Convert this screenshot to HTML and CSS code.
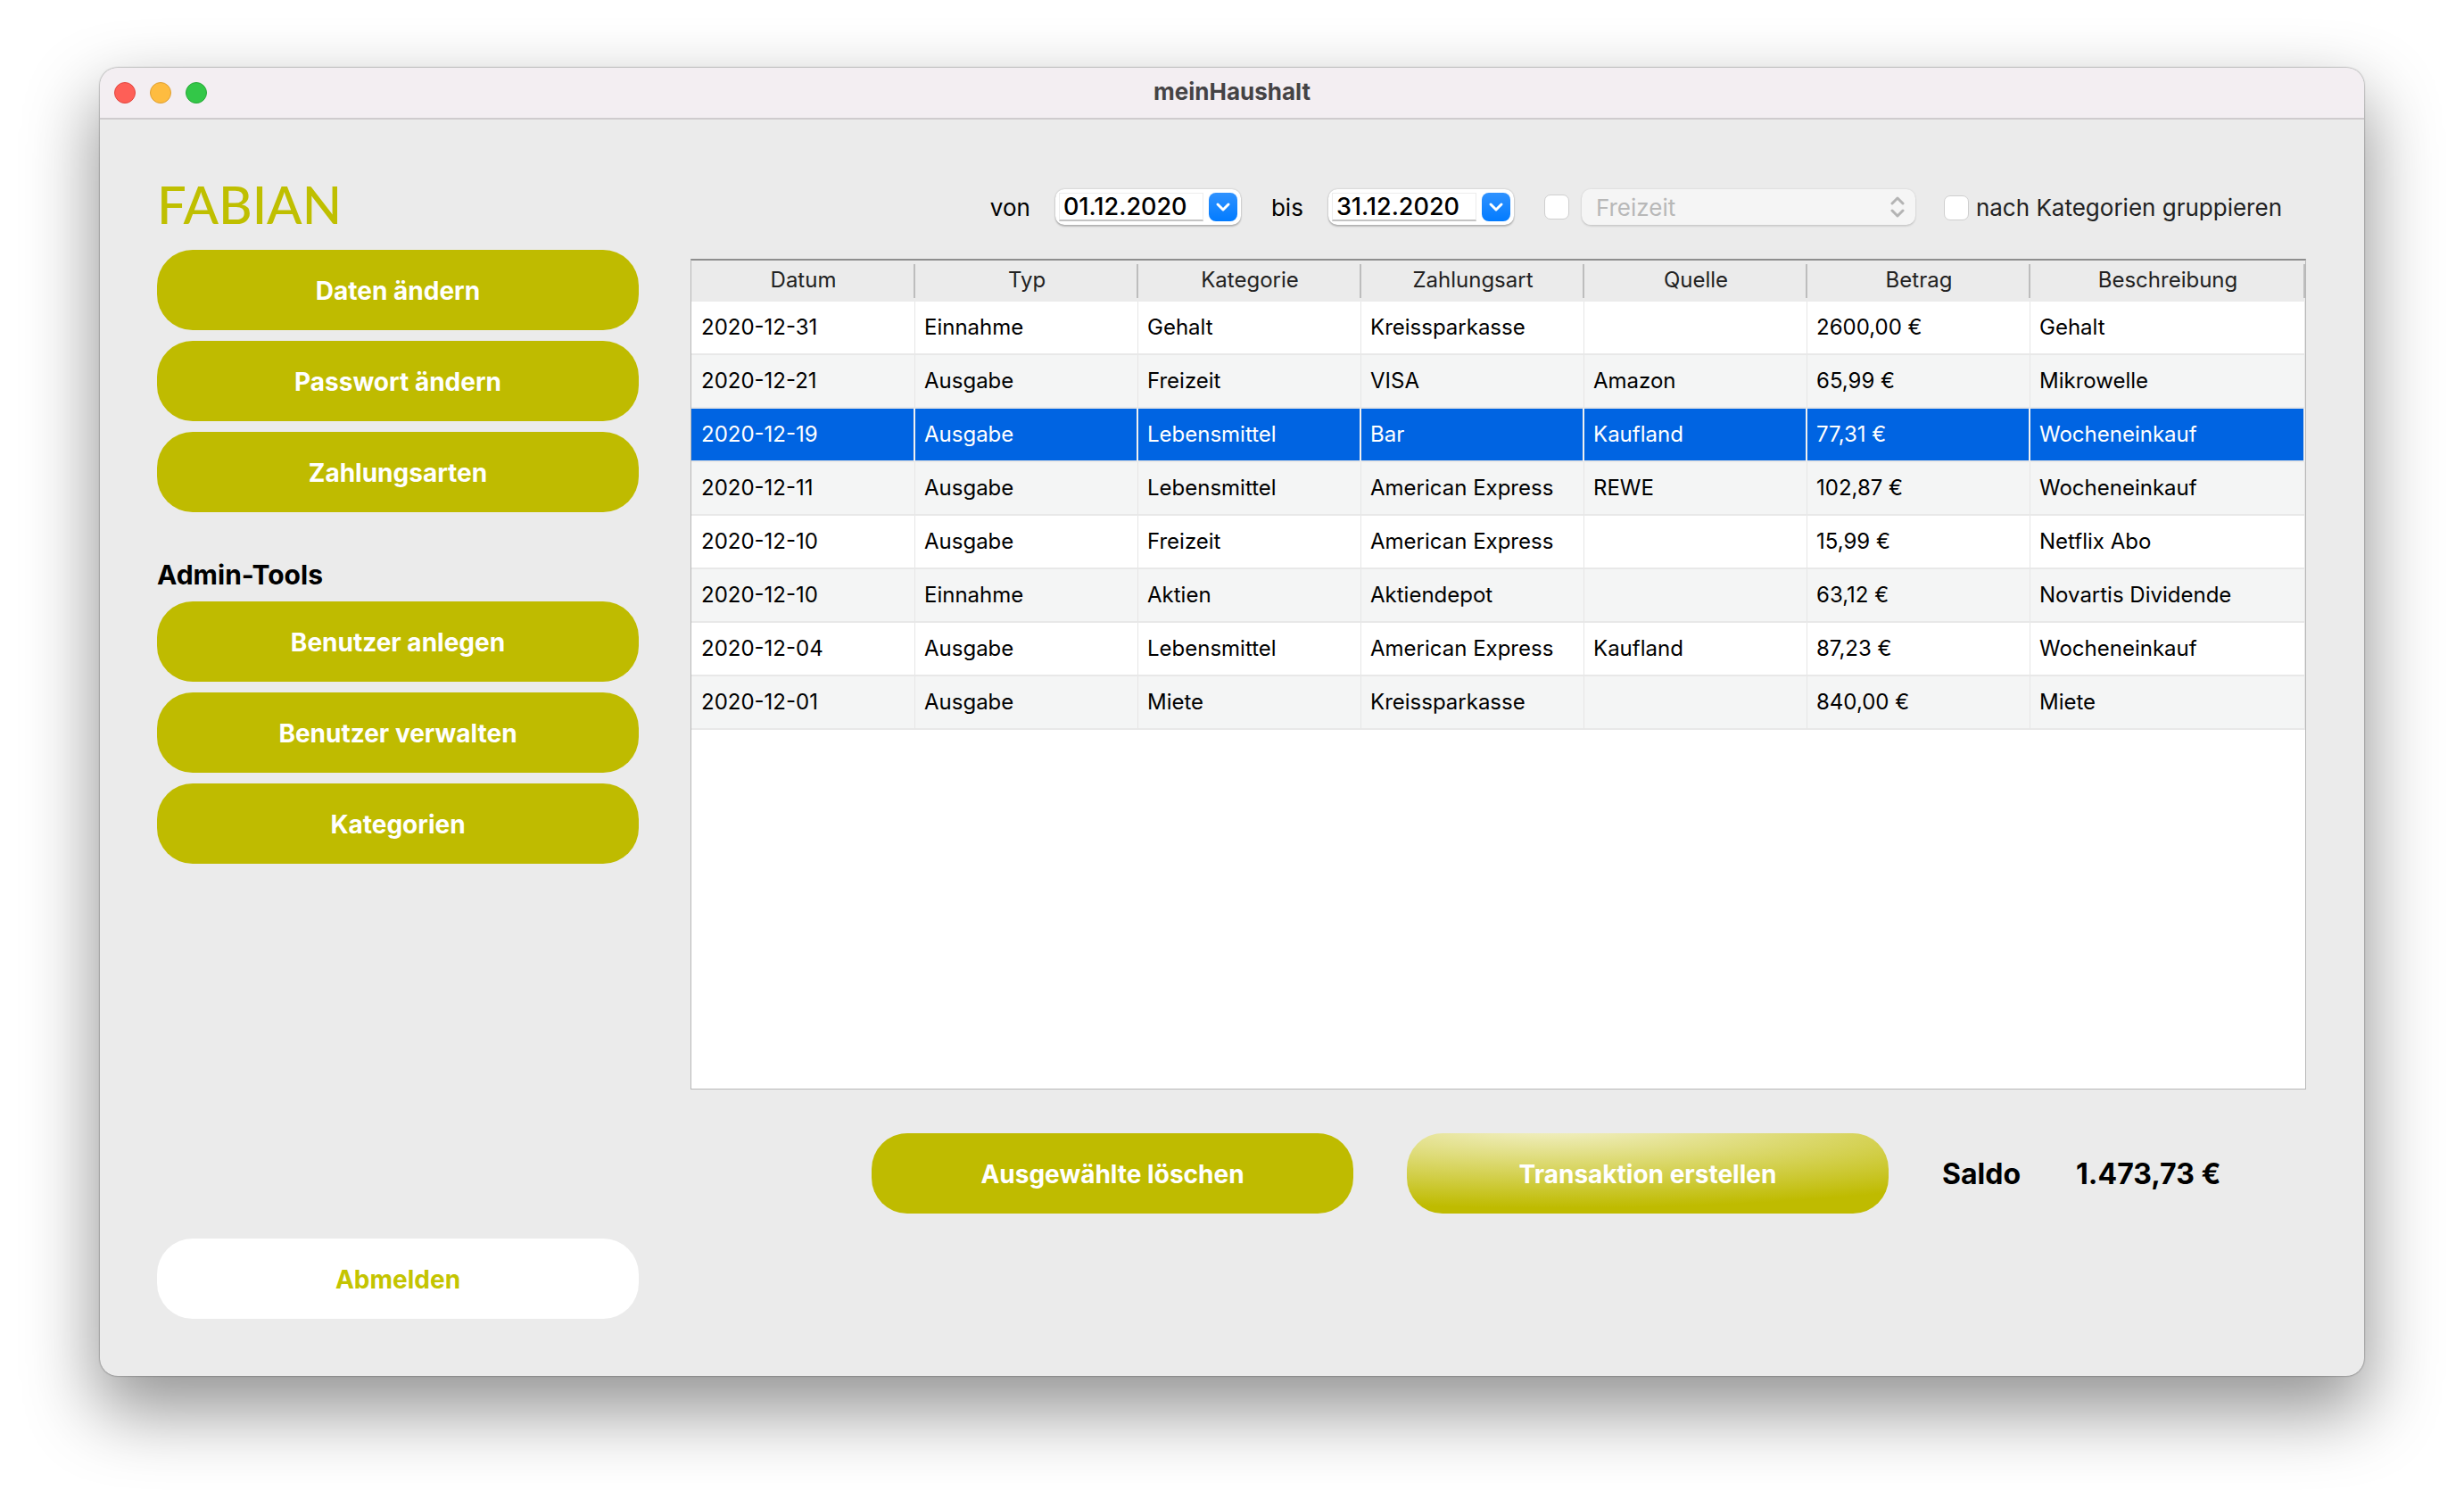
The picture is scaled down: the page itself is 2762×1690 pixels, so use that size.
FILE: index.html
```html
<!DOCTYPE html>
<html lang="de">
<head>
<meta charset="utf-8">
<title>meinHaushalt</title>
<link rel="stylesheet" href="styles.css">
</head>
<body>
<div class="window">
  <header class="titlebar">
    <div class="lights">
      <button class="light close" type="button" aria-label="Schließen"></button>
      <button class="light minimize" type="button" aria-label="Minimieren"></button>
      <button class="light zoom" type="button" aria-label="Vergrößern"></button>
    </div>
    <h1 class="title">meinHaushalt</h1>
  </header>
  <div class="content">
    <aside class="sidebar">
      <h2 class="user">FABIAN</h2>
      <nav class="menu">
        <button class="btn" type="button">Daten ändern</button>
        <button class="btn" type="button">Passwort ändern</button>
        <button class="btn" type="button">Zahlungsarten</button>
      </nav>
      <h3 class="section">Admin-Tools</h3>
      <nav class="menu">
        <button class="btn" type="button">Benutzer anlegen</button>
        <button class="btn" type="button">Benutzer verwalten</button>
        <button class="btn" type="button">Kategorien</button>
      </nav>
      <button class="btn logout" type="button">Abmelden</button>
    </aside>
    <main class="main">
      <form class="filters">
        <label class="range" for="from">von</label>
        <div class="date">
          <input class="date-text" id="from" type="text" value="01.12.2020">
          <button class="date-open" type="button" aria-label="Kalender öffnen"><svg width="32" height="32" viewBox="0 0 32 32"><path d="M10 13l6 6 6-6" fill="none" stroke="#fff" stroke-width="3" stroke-linecap="round" stroke-linejoin="round"/></svg></button>
        </div>
        <label class="range" for="to">bis</label>
        <div class="date">
          <input class="date-text" id="to" type="text" value="31.12.2020">
          <button class="date-open" type="button" aria-label="Kalender öffnen"><svg width="32" height="32" viewBox="0 0 32 32"><path d="M10 13l6 6 6-6" fill="none" stroke="#fff" stroke-width="3" stroke-linecap="round" stroke-linejoin="round"/></svg></button>
        </div>
        <div class="category">
          <input class="check" type="checkbox" aria-label="Nach Kategorie filtern">
          <div class="select-wrap">
            <select class="select" aria-label="Kategorie" disabled><option>Freizeit</option></select>
            <svg class="arrows" width="16" height="24" viewBox="0 0 16 24"><path d="M2 8l6-6 6 6M2 16l6 6 6-6" fill="none" stroke="#b4b4b4" stroke-width="3" stroke-linecap="round" stroke-linejoin="round"/></svg>
          </div>
        </div>
        <label class="group"><input class="check" type="checkbox">nach Kategorien gruppieren</label>
      </form>
      <div class="table-box">
        <table class="table">
          <thead>
            <tr><th class="first">Datum</th><th>Typ</th><th>Kategorie</th><th>Zahlungsart</th><th>Quelle</th><th>Betrag</th><th class="last">Beschreibung</th></tr>
          </thead>
          <tbody>
            <tr><td>2020-12-31</td><td>Einnahme</td><td>Gehalt</td><td>Kreissparkasse</td><td></td><td>2600,00 €</td><td>Gehalt</td></tr>
            <tr><td>2020-12-21</td><td>Ausgabe</td><td>Freizeit</td><td>VISA</td><td>Amazon</td><td>65,99 €</td><td>Mikrowelle</td></tr>
            <tr class="selected"><td>2020-12-19</td><td>Ausgabe</td><td>Lebensmittel</td><td>Bar</td><td>Kaufland</td><td>77,31 €</td><td>Wocheneinkauf</td></tr>
            <tr><td>2020-12-11</td><td>Ausgabe</td><td>Lebensmittel</td><td>American Express</td><td>REWE</td><td>102,87 €</td><td>Wocheneinkauf</td></tr>
            <tr><td>2020-12-10</td><td>Ausgabe</td><td>Freizeit</td><td>American Express</td><td></td><td>15,99 €</td><td>Netflix Abo</td></tr>
            <tr><td>2020-12-10</td><td>Einnahme</td><td>Aktien</td><td>Aktiendepot</td><td></td><td>63,12 €</td><td>Novartis Dividende</td></tr>
            <tr><td>2020-12-04</td><td>Ausgabe</td><td>Lebensmittel</td><td>American Express</td><td>Kaufland</td><td>87,23 €</td><td>Wocheneinkauf</td></tr>
            <tr><td>2020-12-01</td><td>Ausgabe</td><td>Miete</td><td>Kreissparkasse</td><td></td><td>840,00 €</td><td>Miete</td></tr>
          </tbody>
        </table>
      </div>
      <footer class="actions">
        <button class="btn" type="button">Ausgewählte löschen</button>
        <button class="btn create" type="button">Transaktion erstellen</button>
        <div class="saldo"><span class="saldo-label">Saldo</span><output class="amount">1.473,73 €</output></div>
      </footer>
    </main>
  </div>
</div>
</body>
</html>
```
FILE: styles.css
```css
* {
  box-sizing: border-box;
}

body {
  margin: 0;
  min-height: 100vh;
  padding: 76px 112px 148px;
  display: flex;
  background: #fff;
  color: #000;
  font-family: Inter, "Liberation Sans", sans-serif;
  font-size: 24px;
}

h1,
h2,
h3 {
  margin: 0;
}

button,
input,
select {
  font: inherit;
}

.window {
  flex: 1;
  display: flex;
  flex-direction: column;
  border-radius: 20px;
  background: #ebebeb;
  box-shadow: 0 0 2px rgba(0, 0, 0, 0.6), 0 36px 80px 4px rgba(0, 0, 0, 0.42);
}

.titlebar {
  height: 58px;
  padding: 0 16px;
  display: grid;
  grid-template-columns: 1fr auto 1fr;
  align-items: center;
  border-bottom: 2px solid #cfcbce;
  border-radius: 20px 20px 0 0;
  background: #f3eef2;
}

.lights {
  display: flex;
  gap: 16px;
}

.light {
  width: 24px;
  height: 24px;
  padding: 0;
  border: 1px solid;
  border-radius: 50%;
}

.close {
  background: #fe5f57;
  border-color: #e2463f;
}

.minimize {
  background: #febc40;
  border-color: #dfa033;
}

.zoom {
  background: #33c748;
  border-color: #27a938;
}

.title {
  padding-bottom: 3px;
  color: #454345;
  font-size: 26px;
  font-weight: 700;
}

.content {
  flex: 1;
  display: flex;
  gap: 58px;
  padding: 57px 65px 64px 64px;
}

.sidebar {
  flex: 0 0 540px;
  display: flex;
  flex-direction: column;
}

.user {
  height: 89px;
  padding-top: 6px;
  color: #bfbf00;
  font-family: Lato, sans-serif;
  font-size: 58px;
  font-weight: 500;
  line-height: 64px;
}

.menu {
  display: flex;
  flex-direction: column;
  gap: 12px;
}

.btn {
  width: 540px;
  height: 90px;
  padding: 2px 0 0;
  border: 0;
  border-radius: 40px;
  background: #bfbb00;
  color: #fff;
  font-size: 28px;
  font-weight: 700;
}

.section {
  padding: 50px 0 10px;
  font-size: 30px;
  line-height: 40px;
}

.logout {
  margin-top: auto;
  background: #fff;
  color: #c4c400;
}

.main {
  flex: 1;
  min-width: 0;
  display: flex;
  flex-direction: column;
}

.filters {
  height: 99px;
  padding: 21px 27px 0 0;
  display: flex;
  justify-content: flex-end;
  align-items: flex-start;
  font-size: 26px;
  line-height: 42px;
}

.range {
  padding-right: 28px;
}

.date {
  width: 208px;
  height: 40px;
  margin-right: 34px;
  padding: 4px;
  display: flex;
  justify-content: space-between;
  border-radius: 10px;
  background: #fff;
  box-shadow: 0 0 2px rgba(0, 0, 0, 0.25), 0 2px 2px rgba(0, 0, 0, 0.2);
}

.date-text {
  width: 162px;
  height: 32px;
  padding: 0 4px;
  border: 1px solid #ececec;
  border-bottom: 2px solid #c4c4c4;
  background: #fff;
  color: #000;
  font-size: 27px;
  font-weight: 500;
}

.date-open {
  width: 32px;
  height: 32px;
  padding: 0;
  border: 0;
  border-radius: 8px;
  background: linear-gradient(#2f92ff, #027bff);
}

.date-open svg {
  display: block;
}

.category {
  display: flex;
  align-items: center;
  gap: 14px;
  margin-right: 32px;
}

.check {
  appearance: none;
  width: 28px;
  height: 28px;
  margin: 0;
  border: 1px solid #cfcfcf;
  border-radius: 7px;
  background: #fff;
}

.select-wrap {
  display: grid;
  align-items: center;
}

.select {
  grid-area: 1 / 1;
  appearance: none;
  width: 374px;
  height: 40px;
  padding: 0 16px;
  border: 0;
  border-radius: 10px;
  background: #f5f5f5;
  color: #b8b8b8;
  opacity: 1;
  box-shadow: 0 0 2px rgba(0, 0, 0, 0.15), 0 2px 2px rgba(0, 0, 0, 0.1);
}

.arrows {
  grid-area: 1 / 1;
  justify-self: end;
  margin-right: 12px;
  pointer-events: none;
}

.group {
  display: flex;
  align-items: center;
  gap: 8px;
  color: #222;
}

.table-box {
  flex: 1;
  border: 1px solid #b8b8b8;
  border-top: 2px solid #8e8e8e;
  background: #fff;
}

.table {
  width: 100%;
  table-layout: fixed;
  border-collapse: separate;
  border-spacing: 0;
}

th {
  width: 250px;
  height: 46px;
  padding: 0 0 3px;
  background: linear-gradient(#bdbdbd, #bdbdbd) right 4px / 2px 38px no-repeat #ebebeb;
  color: #222;
  font-weight: 400;
}

.first {
  width: 251px;
}

.last {
  width: auto;
}

td {
  height: 60px;
  padding: 0 0 2px 10px;
  border-right: 1px solid #e6e6e6;
  border-bottom: 2px solid #e8e8e8;
  background: #fff;
  white-space: nowrap;
}

td:first-child {
  padding-left: 11px;
}

tbody tr:nth-child(even) td {
  background: #f4f5f5;
}

tbody .selected td {
  border-right: 2px solid #f0f0f0;
  background: #0064e2;
  color: #fff;
}

.actions {
  display: flex;
  gap: 60px;
  padding: 49px 88px 118px 0;
  justify-content: flex-end;
  align-items: center;
}

.create {
  background: radial-gradient(120% 101% at 30% -8%, #efedba 8%, #bfbb00 100%);
}

.saldo {
  display: flex;
  gap: 60px;
  font-size: 32px;
  font-weight: 700;
}

.saldo-label {
  min-width: 90px;
}

.amount {
  min-width: 170px;
}
```
